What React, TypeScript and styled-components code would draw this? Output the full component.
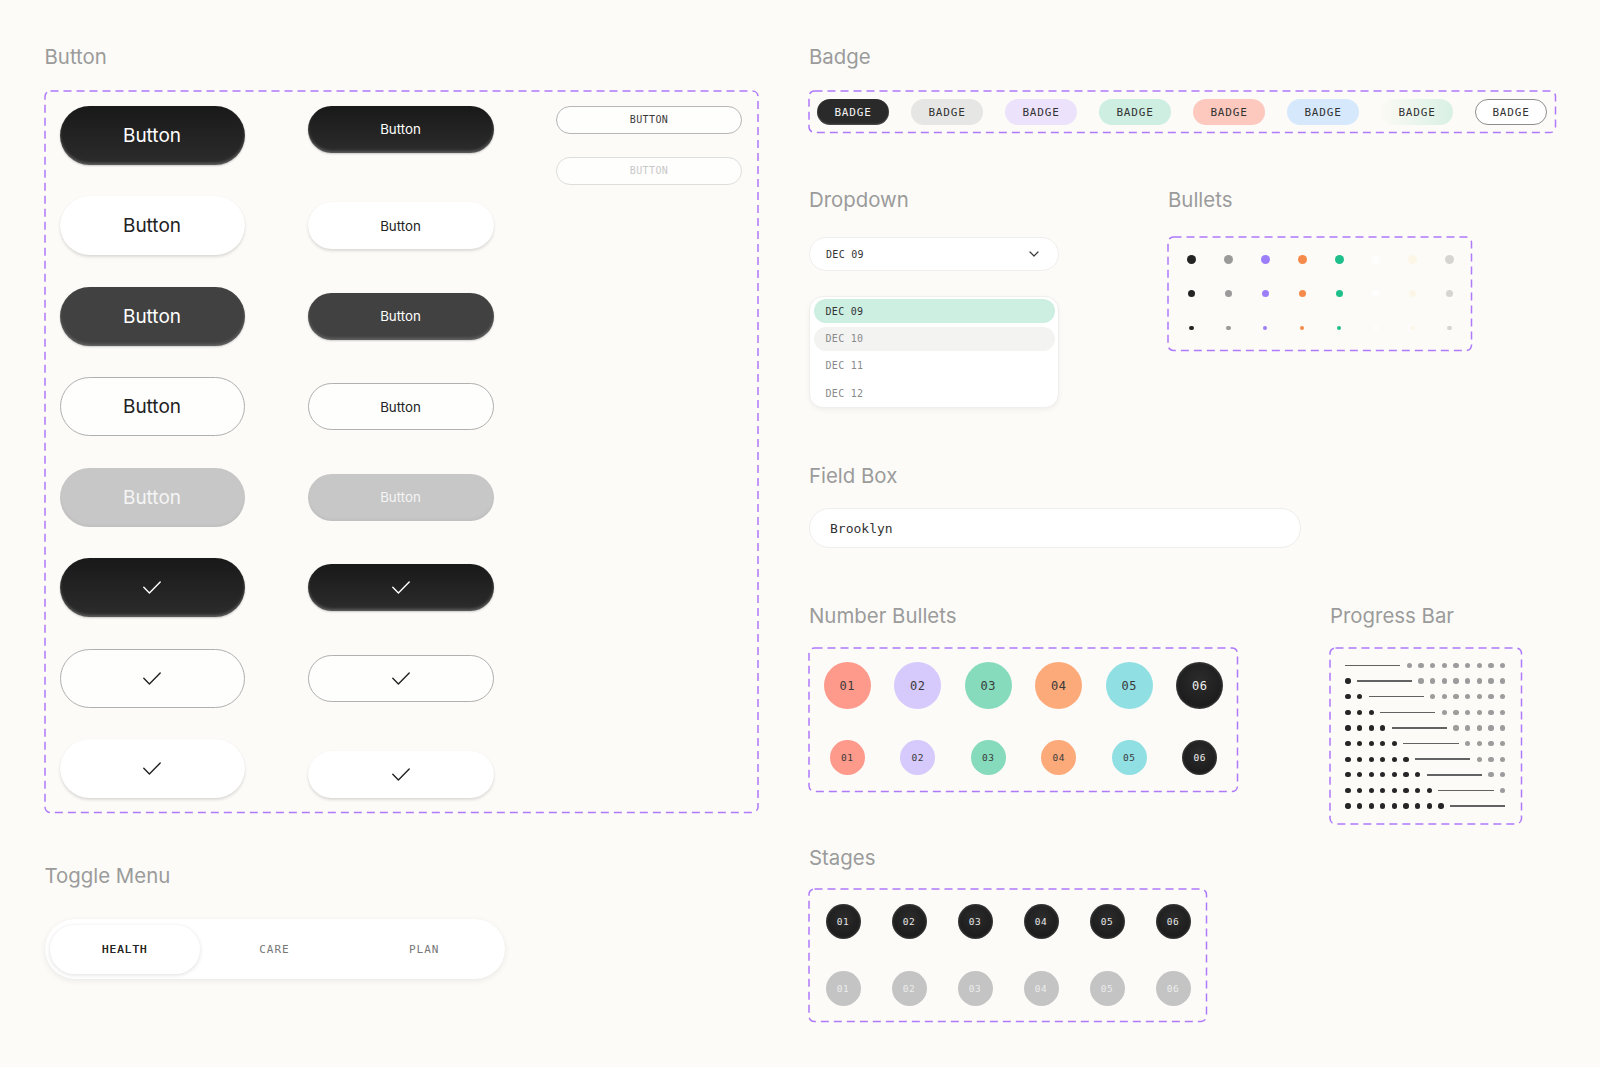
import React from 'react'
import styled, { createGlobalStyle, css } from 'styled-components'

const MONO = `'DejaVu Sans Mono', 'Liberation Mono', monospace`

const GlobalStyle = createGlobalStyle`
  html, body {
    margin: 0;
    background: #fcfbf8;
  }

  body {
    font-family: Inter, 'Noto Sans', sans-serif;
    -webkit-font-smoothing: antialiased;
  }
`

type ButtonVariant = 'black' | 'white' | 'dark' | 'outline' | 'muted'
type BadgeTone = 'dark' | 'grey' | 'lilac' | 'mint' | 'coral' | 'sky' | 'fade' | 'outline'

const buttonRows: { variant: ButtonVariant, check?: boolean, align: 'start' | 'center' | 'end' }[] = [
  { variant: 'black', align: 'start' },
  { variant: 'white', align: 'center' },
  { variant: 'dark', align: 'center' },
  { variant: 'outline', align: 'center' },
  { variant: 'muted', align: 'center' },
  { variant: 'black', check: true, align: 'center' },
  { variant: 'outline', check: true, align: 'center' },
  { variant: 'white', check: true, align: 'end' }
]

const badges: BadgeTone[] = ['dark', 'grey', 'lilac', 'mint', 'coral', 'sky', 'fade', 'outline']
const bulletColors = ['#242424', '#9a9a9a', '#9d7efa', '#f68a4a', '#1ebf8a', '#fefefe', '#fcf6e6', '#d6d5d2']
const bulletSizes = [9, 7, 4.5]
const dates = ['DEC 09', 'DEC 10', 'DEC 11', 'DEC 12']
const numberColors = [
  { bg: '#fd9a8b', fg: '#3a3a3a' },
  { bg: '#d6c9fb', fg: '#3a3a3a' },
  { bg: '#86dbbc', fg: '#3a3a3a' },
  { bg: '#fdaa7b', fg: '#3a3a3a' },
  { bg: '#90dfe3', fg: '#3a3a3a' },
  { bg: 'dark', fg: '#f0f0f0' }
]
const steps = ['01', '02', '03', '04', '05', '06']

export default function App (): JSX.Element {
  return (
    <>
      <GlobalStyle />
      <Page>
        <LeftColumn>
          <Section>
            <Title $gap={23}>Button</Title>
            <ButtonBoard>
              <DashedOutline />
              <ButtonGrid>
                {buttonRows.map((row, i) => (
                  <React.Fragment key={i}>
                    <PillButton $variant={row.variant} $size='lg' $align='center'>
                      {row.check ? <Check /> : 'Button'}
                    </PillButton>
                    <PillButton $variant={row.variant} $size='md' $align={row.align}>
                      {row.check ? <Check /> : 'Button'}
                    </PillButton>
                  </React.Fragment>
                ))}
              </ButtonGrid>
              <MiniColumn>
                <MiniButton>BUTTON</MiniButton>
                <MiniButton $disabled>BUTTON</MiniButton>
              </MiniColumn>
            </ButtonBoard>
          </Section>

          <Section $top={50}>
            <Title $gap={32}>Toggle Menu</Title>
            <Toggle>
              <ToggleItem $active>HEALTH</ToggleItem>
              <ToggleItem>CARE</ToggleItem>
              <ToggleItem>PLAN</ToggleItem>
            </Toggle>
          </Section>
        </LeftColumn>

        <RightColumn>
          <Section>
            <Title $gap={23}>Badge</Title>
            <BadgeRow>
              <DashedOutline />
              {badges.map((tone) => <Badge key={tone} $tone={tone}>BADGE</Badge>)}
            </BadgeRow>
          </Section>

          <Row $top={54} $gap={109}>
            <Section>
              <Title $gap={26}>Dropdown</Title>
              <Select>
                <span>DEC 09</span>
                <Chevron />
              </Select>
              <OptionList>
                {dates.map((d, i) => (
                  <OptionItem key={d} $state={i === 0 ? 'selected' : i === 1 ? 'hover' : 'idle'}>{d}</OptionItem>
                ))}
              </OptionList>
            </Section>

            <Section>
              <Title $gap={25.5}>Bullets</Title>
              <BulletGrid>
                <DashedOutline />
                {bulletSizes.map((size) => bulletColors.map((color) => (
                  <Bullet key={`${size}-${color}`} $size={size} $color={color} />
                )))}
              </BulletGrid>
            </Section>
          </Row>

          <Section $top={55}>
            <Title $gap={21}>Field Box</Title>
            <Field>Brooklyn</Field>
          </Section>

          <Row $top={55} $gap={92}>
            <StackColumn>
              <Section>
                <Title $gap={20.5}>Number Bullets</Title>
                <NumberGrid>
                  <DashedOutline />
                  {[47, 35].map((size) => numberColors.map((c, i) => (
                    <NumberBullet key={`${size}-${i}`} $size={size} $bg={c.bg} $fg={c.fg}>{steps[i]}</NumberBullet>
                  )))}
                </NumberGrid>
              </Section>

              <Section $top={53}>
                <Title $gap={20}>Stages</Title>
                <StageGrid>
                  <DashedOutline />
                  {steps.map((s) => <Stage key={`on-${s}`} $done>{s}</Stage>)}
                  {steps.map((s) => <Stage key={`off-${s}`}>{s}</Stage>)}
                </StageGrid>
              </Section>
            </StackColumn>

            <Section>
              <Title $gap={20}>Progress Bar</Title>
              <ProgressBoard>
                <DashedOutline />
                {Array.from({ length: 10 }).map((_, row) => (
                  <ProgressRow key={row}>
                    {Array.from({ length: row }).map((_, i) => <ProgressDot key={`d${i}`} $filled />)}
                    <ProgressLine />
                    {Array.from({ length: 9 - row }).map((_, i) => <ProgressDot key={`g${i}`} />)}
                  </ProgressRow>
                ))}
              </ProgressBoard>
            </Section>
          </Row>
        </RightColumn>
      </Page>
    </>
  )
}

function Check (): JSX.Element {
  return (
    <svg width='18' height='13' viewBox='0 0 18 13' fill='none'>
      <path d='M0.8 6.3 L6.4 11.9 L17.2 0.9' stroke='currentColor' strokeWidth='1.4' strokeLinecap='round' strokeLinejoin='round' />
    </svg>
  )
}

function Chevron (): JSX.Element {
  return (
    <svg width='10' height='6' viewBox='0 0 10 6' fill='none'>
      <path d='M1 1 L5 5 L9 1' stroke='#3a3a3a' strokeWidth='1.2' strokeLinecap='round' strokeLinejoin='round' />
    </svg>
  )
}

// dashed purple frame drawn over the board edge, longer dashes than css `dashed`
function DashedOutline (): JSX.Element {
  return (
    <Outline aria-hidden>
      <rect width='100%' height='100%' rx='5.5' fill='none' stroke='#ae7afa' strokeWidth='1.5' strokeDasharray='8 5' />
    </Outline>
  )
}

const Page = styled.div`
  display: flex;
  gap: 51px;

  box-sizing: border-box;
  width: 1600px;
  min-height: 1067px;
  padding: 44px 0 0 44.5px;
`

const LeftColumn = styled.div`
  display: flex;
  flex-direction: column;

  width: 713.5px;
`

const RightColumn = styled.div`
  display: flex;
  flex-direction: column;
`

const Section = styled.section<{ $top?: number }>`
  display: flex;
  flex-direction: column;
  align-items: flex-start;

  margin-top: ${({ $top }) => $top ?? 0}px;
`

const Row = styled.div<{ $top: number, $gap: number }>`
  display: flex;
  align-items: flex-start;
  gap: ${({ $gap }) => $gap}px;

  margin-top: ${({ $top }) => $top}px;
`

const StackColumn = styled.div`
  display: flex;
  flex-direction: column;

  width: 429px;
`

const Title = styled.h2<{ $gap: number }>`
  height: 24px;
  margin: 0 0 ${({ $gap }) => $gap}px;

  font-size: 20.4px;
  font-weight: 400;
  line-height: 25px;
  color: #9b9b9b;
`

const Frame = styled.div`
  position: relative;

  box-sizing: border-box;
  border: 1.5px solid transparent;
`

const Outline = styled.svg`
  position: absolute;
  top: -0.75px;
  left: -0.75px;

  width: calc(100% + 1.5px);
  height: calc(100% + 1.5px);
  overflow: visible;
  pointer-events: none;
`

// Buttons

const ButtonBoard = styled(Frame)`
  display: flex;
  gap: 62.5px;

  width: 713.5px;
  height: 722px;
  padding: 13.5px 14px 0 14px;
`

const ButtonGrid = styled.div`
  display: grid;
  grid-template-columns: 185px 186px;
  grid-auto-rows: 59px;
  column-gap: 63px;
  row-gap: 31.5px;
`

const variantStyles: Record<ButtonVariant, ReturnType<typeof css>> = {
  black: css`
    background: linear-gradient(180deg, #191919 0%, #2c2c2c 100%);
    color: #ffffff;
    box-shadow: inset 0 -2px 3px rgba(255, 255, 255, 0.24), 0 1px 2px rgba(0, 0, 0, 0.2);
  `,
  white: css`
    background: #ffffff;
    color: #222222;
    box-shadow: 0 2px 3px rgba(0, 0, 0, 0.13), 0 0 1px rgba(0, 0, 0, 0.06);
  `,
  dark: css`
    background: #414141;
    color: #ffffff;
    box-shadow: inset 0 -2px 3px rgba(255, 255, 255, 0.18), 0 1px 2px rgba(0, 0, 0, 0.18);
  `,
  outline: css`
    background: #fefefd;
    color: #222222;
    border: 1px solid #b0b0b0;
  `,
  muted: css`
    background: #c7c7c7;
    color: #f5f5f5;
    box-shadow: inset 0 -2px 3px rgba(0, 0, 0, 0.04);
  `
}

const PillButton = styled.button<{ $variant: ButtonVariant, $size: 'lg' | 'md', $align: 'start' | 'center' | 'end' }>`
  display: flex;
  align-items: center;
  justify-content: center;
  align-self: ${({ $align }) => $align};

  box-sizing: border-box;
  width: 100%;
  height: ${({ $size }) => $size === 'lg' ? 59 : 47}px;
  padding: 0;
  border: none;
  border-radius: 30px;

  font-family: Inter, 'Noto Sans', sans-serif;
  font-size: ${({ $size }) => $size === 'lg' ? 19 : 13.3}px;
  font-weight: 400;

  ${({ $variant }) => variantStyles[$variant]}
`

const MiniColumn = styled.div`
  display: flex;
  flex-direction: column;
  gap: 23px;

  width: 186px;
`

const MiniButton = styled.button<{ $disabled?: boolean }>`
  box-sizing: border-box;
  height: 28px;
  padding: 0;
  border: 1px solid ${({ $disabled }) => $disabled ? '#dddddb' : '#b6b6b6'};
  border-radius: 14px;

  background: #fefefd;
  color: ${({ $disabled }) => $disabled ? '#c8c8c8' : '#3a3a3a'};

  font-family: ${MONO};
  font-size: 10px;
  letter-spacing: 0.4px;
`

// Toggle

const Toggle = styled.div`
  display: grid;
  grid-template-columns: repeat(3, 1fr);

  box-sizing: border-box;
  width: 460px;
  height: 60px;
  padding: 5.5px;
  border-radius: 30px;

  background: #ffffff;
  box-shadow: 0 2px 6px rgba(0, 0, 0, 0.07), 0 0 1px rgba(0, 0, 0, 0.05);
`

const ToggleItem = styled.div<{ $active?: boolean }>`
  display: flex;
  align-items: center;
  justify-content: center;

  border-radius: 25px;

  font-family: ${MONO};
  font-size: 11px;
  letter-spacing: 1px;
  color: ${({ $active }) => $active ? '#262626' : '#777777'};

  ${({ $active }) => $active && css`
    background: #ffffff;
    box-shadow: 0 1px 4px rgba(0, 0, 0, 0.13);
    text-shadow: 0 0 0.4px #262626;
  `}
`

// Badges

const BadgeRow = styled(Frame)`
  display: flex;
  align-items: center;
  gap: 22px;

  width: 747px;
  height: 42px;
  padding: 0 7px;
`

const badgeTones: Record<BadgeTone, ReturnType<typeof css>> = {
  dark: css`background: #2a2a2a; color: #f4f4f4; box-shadow: inset 0 -1px 2px rgba(255, 255, 255, 0.2);`,
  grey: css`background: #e6e6e5; color: #333333;`,
  lilac: css`background: #ece2fb; color: #333333;`,
  mint: css`background: #cdeee1; color: #333333;`,
  coral: css`background: #fdc8be; color: #333333;`,
  sky: css`background: #d6e9fc; color: #333333;`,
  fade: css`background: linear-gradient(90deg, #fbfaf4 0%, #d9f0e4 100%); color: #333333;`,
  outline: css`background: #ffffff; color: #333333; border: 1px solid #8e8e8e;`
}

const Badge = styled.span<{ $tone: BadgeTone }>`
  display: flex;
  align-items: center;
  justify-content: center;
  flex: none;

  box-sizing: border-box;
  width: 72px;
  height: 26px;
  border-radius: 13px;

  font-family: ${MONO};
  font-size: 11px;
  letter-spacing: 0.8px;

  ${({ $tone }) => badgeTones[$tone]}
`

// Dropdown

const Select = styled.div`
  display: flex;
  align-items: center;
  justify-content: space-between;

  box-sizing: border-box;
  width: 250px;
  height: 34px;
  padding: 0 19px 0 16px;
  border: 1px solid #efeeec;
  border-radius: 17px;

  background: #ffffff;

  font-family: ${MONO};
  font-size: 10px;
  letter-spacing: 0.3px;
  color: #333333;
`

const OptionList = styled.div`
  display: flex;
  flex-direction: column;
  gap: 3.3px;

  box-sizing: border-box;
  width: 250px;
  margin-top: 25px;
  padding: 2.3px 3.5px;
  border: 1px solid #f0efed;
  border-radius: 14px;

  background: #ffffff;
  box-shadow: 0 2px 5px rgba(0, 0, 0, 0.05);
`

const OptionItem = styled.div<{ $state: 'selected' | 'hover' | 'idle' }>`
  display: flex;
  align-items: center;

  height: 24px;
  padding-left: 12px;
  border-radius: 12px;

  background: ${({ $state }) => $state === 'selected' ? '#ccefe2' : $state === 'hover' ? '#f3f3f2' : 'transparent'};
  color: ${({ $state }) => $state === 'selected' ? '#333333' : '#8a8a8a'};

  font-family: ${MONO};
  font-size: 10px;
  letter-spacing: 0.3px;
`

// Bullets

const BulletGrid = styled(Frame)`
  display: grid;
  grid-template-columns: repeat(8, 36.9px);
  grid-auto-rows: 20px;
  row-gap: 14.5px;
  place-items: center;

  width: 304px;
  height: 114px;
  padding: 11.5px 4px 0;
`

const Bullet = styled.span<{ $size: number, $color: string }>`
  width: ${({ $size }) => $size}px;
  height: ${({ $size }) => $size}px;
  border-radius: 50%;

  background: ${({ $color }) => $color};
`

// Field

const Field = styled.div`
  display: flex;
  align-items: center;

  box-sizing: border-box;
  width: 492px;
  height: 40px;
  padding-left: 20px;
  border: 1px solid #efeeec;
  border-radius: 20px;

  background: #ffffff;

  font-family: ${MONO};
  font-size: 13px;
  color: #333333;
`

// Number bullets & stages

const NumberGrid = styled(Frame)`
  display: grid;
  grid-template-columns: repeat(6, 1fr);
  grid-template-rows: 47px 35px;
  row-gap: 31px;
  place-items: center;

  width: 429px;
  height: 144px;
  padding: 13.5px 2px 0;
`

const darkDisc = css`
  background: radial-gradient(circle at 50% 40%, #2c2c2c 0%, #1c1c1c 70%, #3a3a3a 100%);
  box-shadow: inset 0 0 3px rgba(255, 255, 255, 0.28);
`

const NumberBullet = styled.span<{ $size: number, $bg: string, $fg: string }>`
  display: flex;
  align-items: center;
  justify-content: center;

  width: ${({ $size }) => $size}px;
  height: ${({ $size }) => $size}px;
  border-radius: 50%;

  background: ${({ $bg }) => $bg};
  color: ${({ $fg }) => $fg};
  ${({ $bg }) => $bg === 'dark' && darkDisc}

  font-family: ${MONO};
  font-size: ${({ $size }) => $size > 40 ? 12 : 9.5}px;
  letter-spacing: 0.5px;
`

const StageGrid = styled(Frame)`
  display: grid;
  grid-template-columns: repeat(6, 1fr);
  grid-auto-rows: 35px;
  row-gap: 32px;
  place-items: center;

  width: 398px;
  height: 133px;
  padding: 13.7px 0 0;
`

const Stage = styled.span<{ $done?: boolean }>`
  display: flex;
  align-items: center;
  justify-content: center;

  width: 35px;
  height: 35px;
  border-radius: 50%;

  background: #c4c4c4;
  color: #ececec;
  ${({ $done }) => $done && darkDisc}
  ${({ $done }) => $done && css`color: #e6e6e6;`}

  font-family: ${MONO};
  font-size: 9.5px;
  letter-spacing: 0.5px;
`

// Progress

const ProgressBoard = styled(Frame)`
  display: flex;
  flex-direction: column;
  gap: 10.3px;

  width: 192px;
  height: 176.5px;
  padding: 14.3px 14.2px;
`

const ProgressRow = styled.div`
  display: flex;
  align-items: center;
  gap: 6.33px;

  height: 5.33px;
`

const ProgressDot = styled.span<{ $filled?: boolean }>`
  flex: none;

  width: 5.33px;
  height: 5.33px;
  border-radius: 50%;

  background: ${({ $filled }) => $filled ? '#262626' : '#9c9c9c'};
`

const ProgressLine = styled.span`
  flex: none;

  width: 55.3px;
  height: 1.5px;

  background: #626262;
`
